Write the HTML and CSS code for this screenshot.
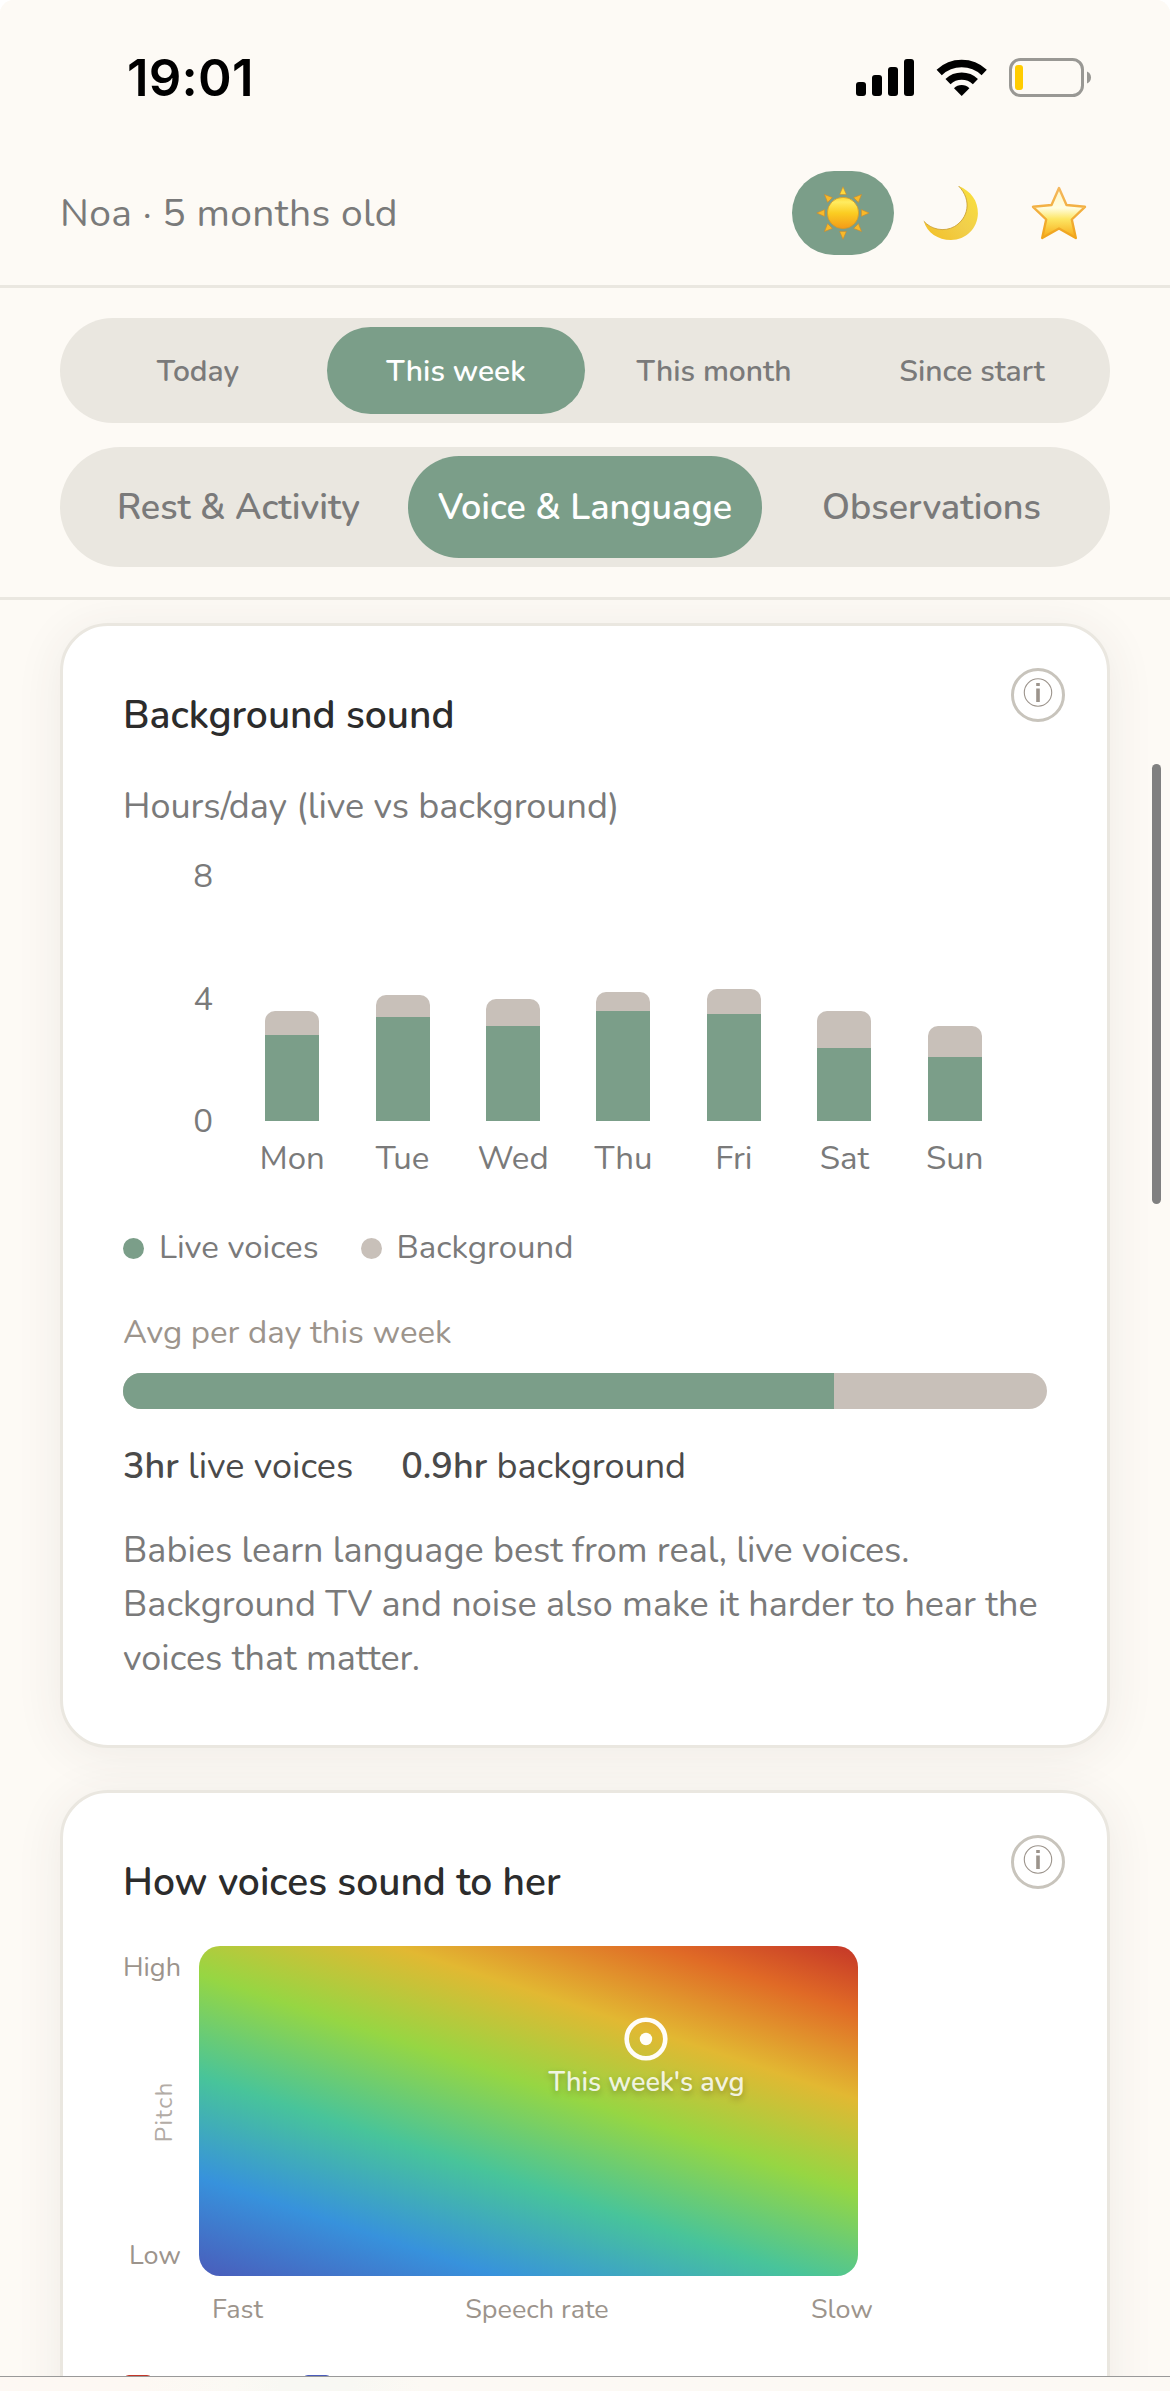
FILE: index.html
```html
<!DOCTYPE html>
<html lang="en">
<head>
<meta charset="utf-8">
<title>Voice &amp; Language</title>
<link rel="stylesheet" href="styles.css">
</head>
<body>
<div class="screen">
  <header class="top">
    <div class="status">
      <span class="time">19:01</span>
      <svg class="status-icons" viewBox="0 0 236 41" width="236" height="41" aria-hidden="true">
        <rect x="0" y="25" width="10" height="14" rx="3"/>
        <rect x="16" y="18" width="10" height="21" rx="3"/>
        <rect x="32" y="10" width="10" height="29" rx="3"/>
        <rect x="48" y="2" width="10" height="37" rx="3"/>
        <g fill="none" stroke="#000">
          <path d="M83.2 15.4A32.8 32.8 0 0 1 128.2 15.4" stroke-width="7.6"/>
          <path d="M92 24.6A20 20 0 0 1 119.400 24.6" stroke-width="7.4"/>
        </g>
        <path d="M105.700 39L98 31.200A11 11 0 0 1 113.400 31.200Z"/>
        <rect x="154.500" y="2.500" width="72" height="36" rx="10" fill="none" stroke="#999894" stroke-width="3"/>
        <rect x="159" y="8" width="8" height="25" rx="3" fill="#ffcc00"/>
        <path d="M231 14.500V26.500C233.500 25.500 235 23.300 235 20.500S233.500 15.500 231 14.500Z" fill="#999894"/>
      </svg>
    </div>
    <div class="profile">
      <span class="who">Noa · 5 months old</span>
      <div class="modes">
        <span class="mode mode-on">
          <svg viewBox="-28 -28 56 56" width="56" height="56">
            <defs>
              <linearGradient id="sun" x1="0" y1="0" x2="0" y2="1"><stop offset="0" stop-color="#fdd835"/><stop offset=".15" stop-color="#ffec60"/><stop offset=".5" stop-color="#fbcd22"/><stop offset="1" stop-color="#f39a18"/></linearGradient>
              <path id="ray" d="M0-26.200L3.400-18.400H-3.400Z"/>
            </defs>
            <g fill="#f9b928" stroke="#c98a2c" stroke-width=".6">
              <use href="#ray" fill="#ffd93a"/><use href="#ray" transform="rotate(45)"/><use href="#ray" transform="rotate(90)"/><use href="#ray" transform="rotate(135)"/><use href="#ray" transform="rotate(180)"/><use href="#ray" transform="rotate(225)"/><use href="#ray" transform="rotate(270)"/><use href="#ray" transform="rotate(315)"/>
            </g>
            <circle r="15.700" fill="url(#sun)" stroke="#d99622" stroke-width=".7"/>
          </svg>
        </span>
        <span class="mode">
          <svg viewBox="0 0 56 56" width="56" height="56">
            <defs><linearGradient id="moon" x1="0" y1="1" x2="1" y2="0"><stop offset="0" stop-color="#f3bf25"/><stop offset=".5" stop-color="#f1cf4b"/><stop offset="1" stop-color="#fbe23a"/></linearGradient></defs>
            <path d="M35.600 1C48 6 55.200 16 54.900 28.500C54.500 43.500 43 54.800 28 55C15 55 4 47.500 .8 36.200C8 44.300 21 47.500 31.500 41.500C45 33.500 49.500 15.500 35.600 1Z" fill="url(#moon)"/>
            <path d="M.8 36.200C8 44.300 21 47.500 31.500 41.500C45 33.500 49.500 15.500 35.600 1" fill="none" stroke="#c79a2e" stroke-width=".8"/>
          </svg>
        </span>
        <span class="mode">
          <svg viewBox="0 0 56 56" width="56" height="56">
            <defs><linearGradient id="star" x1="0" y1="0" x2="0" y2="1"><stop offset="0" stop-color="#fff6c8"/><stop offset=".4" stop-color="#fffde0"/><stop offset=".62" stop-color="#fde664"/><stop offset="1" stop-color="#f7a916"/></linearGradient>
            <linearGradient id="rim" x1="0" y1="0" x2="0" y2="1"><stop offset="0" stop-color="#f4b75c"/><stop offset="1" stop-color="#f0a51c"/></linearGradient></defs>
            <path d="M28 3L35.500 20L54 21.800L40.800 34.500L44.800 53L28 43.500L11.200 53L15.200 34.500L2 21.800L20.500 20Z" fill="url(#star)" stroke="url(#rim)" stroke-width="2.400" stroke-linejoin="round"/>
          </svg>
        </span>
      </div>
    </div>
  </header>

  <nav class="filters">
    <div class="seg seg-range">
      <span class="tab">Today</span><span class="tab tab-on">This week</span><span class="tab">This month</span><span class="tab">Since start</span>
    </div>
    <div class="seg seg-topic">
      <span class="tab">Rest &amp; Activity</span><span class="tab tab-on tab-wide">Voice &amp; Language</span><span class="tab">Observations</span>
    </div>
  </nav>

  <main class="feed">
    <section class="card">
      <svg class="info" viewBox="0 0 54 54" width="54" height="54"><circle cx="27" cy="27" r="25.500" fill="none" stroke="#c8c4bc" stroke-width="3"/><circle cx="27" cy="24.500" r="13.700" fill="none" stroke="#9c948c" stroke-width="1.100"/><path d="M25.200 15H28.800V18H25.200ZM25.200 20.500H28.800V34H25.200Z" fill="#9c948c"/></svg>
      <h2>Background sound</h2>
      <p class="sub">Hours/day (live vs background)</p>
      <div class="chart">
        <div class="yaxis"><span>8</span><span>4</span><span>0</span></div>
        <div class="plot">
          <div class="col"><i class="bg" style="height:10%"></i><i class="live" style="height:35%"></i></div>
          <div class="col"><i class="bg" style="height:8.75%"></i><i class="live" style="height:42.5%"></i></div>
          <div class="col"><i class="bg" style="height:11.25%"></i><i class="live" style="height:38.75%"></i></div>
          <div class="col"><i class="bg" style="height:7.5%"></i><i class="live" style="height:45%"></i></div>
          <div class="col"><i class="bg" style="height:10%"></i><i class="live" style="height:43.75%"></i></div>
          <div class="col"><i class="bg" style="height:15%"></i><i class="live" style="height:30%"></i></div>
          <div class="col"><i class="bg" style="height:12.5%"></i><i class="live" style="height:26.25%"></i></div>
        </div>
      </div>
      <div class="days"><span>Mon</span><span>Tue</span><span>Wed</span><span>Thu</span><span>Fri</span><span>Sat</span><span>Sun</span></div>
      <div class="legend"><span class="key"><i class="dot live"></i>Live voices</span><span class="key"><i class="dot bg"></i>Background</span></div>
      <p class="avg">Avg per day this week</p>
      <div class="split"><i class="live" style="width:77%"></i></div>
      <div class="totals"><span><b>3hr</b> live voices</span><span><b>0.9hr</b> background</span></div>
      <p class="note">Babies learn language best from real, live voices. Background TV and noise also make it harder to hear the voices that matter.</p>
    </section>

    <section class="card">
      <svg class="info" viewBox="0 0 54 54" width="54" height="54"><circle cx="27" cy="27" r="25.500" fill="none" stroke="#c8c4bc" stroke-width="3"/><circle cx="27" cy="24.500" r="13.700" fill="none" stroke="#9c948c" stroke-width="1.100"/><path d="M25.200 15H28.800V18H25.200ZM25.200 20.500H28.800V34H25.200Z" fill="#9c948c"/></svg>
      <h2>How voices sound to her</h2>
      <div class="heatrow">
        <div class="pitch"><span>High</span><span class="pitch-name">Pitch</span><span>Low</span></div>
        <div class="heat">
          <div class="marker" style="left:67.9%;top:28.200%">
            <svg viewBox="-22 -22 44 44" width="44" height="44"><circle r="19.300" fill="none" stroke="#fffdf8" stroke-width="4.600"/><circle r="6.200" fill="#fffdf8"/></svg>
            <span>This week's avg</span>
          </div>
        </div>
      </div>
      <div class="rate"><span>Fast</span><span>Speech rate</span><span>Slow</span></div>
      <div class="swatches"><i class="sw sw-red"></i><i class="sw sw-blue"></i></div>
    </section>
  </main>
  <footer class="bottom"></footer>
  <div class="scrollbar"></div>
</div>
</body>
</html>
```
FILE: styles.css
```css
* { box-sizing: border-box; margin: 0; padding: 0; }
body { background: #fff; font-family: "Nunito", "Open Sans", sans-serif; color: #7a7a7a; }
i { font-style: normal; display: block; }
svg { display: block; }

.screen { position: relative; width: 1170px; height: 2391px; display: flex; flex-direction: column; background: #fdfaf5; border-radius: 14px 14px 0 0; overflow: hidden; }

.top { position: relative; z-index: 1; height: 288px; border-bottom: 3px solid #eae7e0; background: #fdfaf5; }
.status { display: flex; justify-content: space-between; align-items: flex-start; height: 171px; padding: 57px 78px 0 127px; }
.time { font: 600 51px/42px "Inter", sans-serif; letter-spacing: .2px; color: #000; }
.profile { display: flex; justify-content: space-between; align-items: center; height: 84px; padding: 0 60px; }
.who { font-size: 39px; letter-spacing: .35px; }
.modes { display: flex; gap: 6px; }
.mode { display: flex; align-items: center; justify-content: center; width: 102px; height: 84px; border-radius: 42px; }
.mode-on { background: #7b9e89; }

.filters { position: relative; z-index: 1; display: flex; flex-direction: column; gap: 24px; height: 312px; padding: 30px 60px 0; border-bottom: 3px solid #eae7e0; background: #fdfaf5; }
.seg { display: flex; padding: 9px; border-radius: 60px; background: #eae7e0; font-weight: 600; }
.seg-range { height: 105px; font-size: 30px; }
.seg-range .tab { padding-top: 2px; }
.seg-topic { height: 120px; font-size: 36px; }
.tab { flex: 1; display: flex; align-items: center; justify-content: center; border-radius: 51px; white-space: nowrap; }
.tab-wide { flex: 0 0 354px; }
.tab-on { background: #7b9e89; color: #fff; }

.feed { flex: 1; min-height: 0; padding: 23px 60px 0; }
.card { position: relative; margin-bottom: 42px; padding: 61px 60px 59px; border: 3px solid #eae7e0; border-radius: 48px; background: #fff; box-shadow: 0 6px 48px rgba(60, 50, 50, .08); }
.info { position: absolute; top: 42px; right: 42px; }
h2 { font-size: 39px; line-height: 58px; font-weight: 600; color: #2c2c2c; }
.sub { margin-top: 37px; font-size: 36px; line-height: 50px; }

.live { background: #7b9e89; }
.bg { background: #c8c0b9; }
.chart { display: flex; gap: 24px; height: 245px; margin-top: 44px; }
.yaxis { display: flex; flex-direction: column; justify-content: space-between; width: 90px; margin: -19px 0 -21px; text-align: right; font-size: 33px; line-height: 40px; }
.plot, .days { display: flex; width: 773px; }
.col { flex: 1; display: flex; flex-direction: column; justify-content: flex-end; align-items: center; }
.col i { width: 54px; }
.col .bg { border-radius: 10px 10px 0 0; }
.days { margin: 16px 0 0 114px; font-size: 33px; line-height: 44px; }
.days span { flex: 1; text-align: center; }

.legend { display: flex; gap: 42px; margin-top: 45px; font-size: 33px; line-height: 44px; }
.key { display: flex; align-items: center; gap: 15px; }
.dot { width: 21px; height: 21px; border-radius: 50%; }
.avg { margin-top: 41px; font-size: 33px; line-height: 44px; color: #9c948c; }
.split { height: 36px; margin-top: 18px; border-radius: 18px; overflow: hidden; background: #c8c0b9; }
.split i { height: 100%; }
.totals { display: flex; gap: 48px; margin-top: 33px; font-size: 36px; line-height: 50px; color: #4a4a4a; }
.totals b { font-weight: 600; }
.note { margin-top: 32px; font-size: 36px; line-height: 54px; }

.heatrow { display: flex; gap: 18px; height: 330px; margin-top: 34px; }
.pitch { display: flex; flex-direction: column; justify-content: space-between; align-items: flex-end; width: 58px; padding: 5px 0 3px; font-size: 27px; line-height: 34px; color: #9c948c; }
.pitch-name { writing-mode: vertical-rl; transform: rotate(180deg); font-size: 24px; letter-spacing: 1.5px; color: #b3aca6; }
.heat { position: relative; width: 659px; border-radius: 21px; background: linear-gradient(18.300deg, #4a5cba 0%, #3792dc 18%, #48c49a 36.500%, #96d643 55%, #e2b832 72%, #e06a26 88%, #c43628 100%); }
.marker { position: absolute; display: flex; flex-direction: column; align-items: center; transform: translate(-50%, -22px); }
.marker span { margin-top: 5px; font-size: 27px; line-height: 34px; font-weight: 600; color: rgba(255, 255, 255, .85); white-space: nowrap; text-shadow: 0 3px 6px rgba(0, 0, 0, .25); }
.rate { display: flex; justify-content: space-between; width: 661px; margin: 17px 0 0 89px; font-size: 27px; line-height: 34px; color: #9c948c; }
.swatches { display: flex; gap: 149px; margin-top: 48px; }
.sw { width: 30px; height: 30px; border-radius: 6px; }
.sw-red { background: #c43628; }
.sw-blue { background: #4a5cba; }

.bottom { position: relative; z-index: 1; height: 15px; border-top: 1px solid #999; background: linear-gradient(90deg, #fdf8f3 0 12%, #fbf9f4 20%, #f8f8f3 24% 30%, #fcf9f4 36%); }
.scrollbar { position: absolute; z-index: 2; top: 764px; right: 9px; width: 9px; height: 440px; border-radius: 5px; background: #808080; }
```
